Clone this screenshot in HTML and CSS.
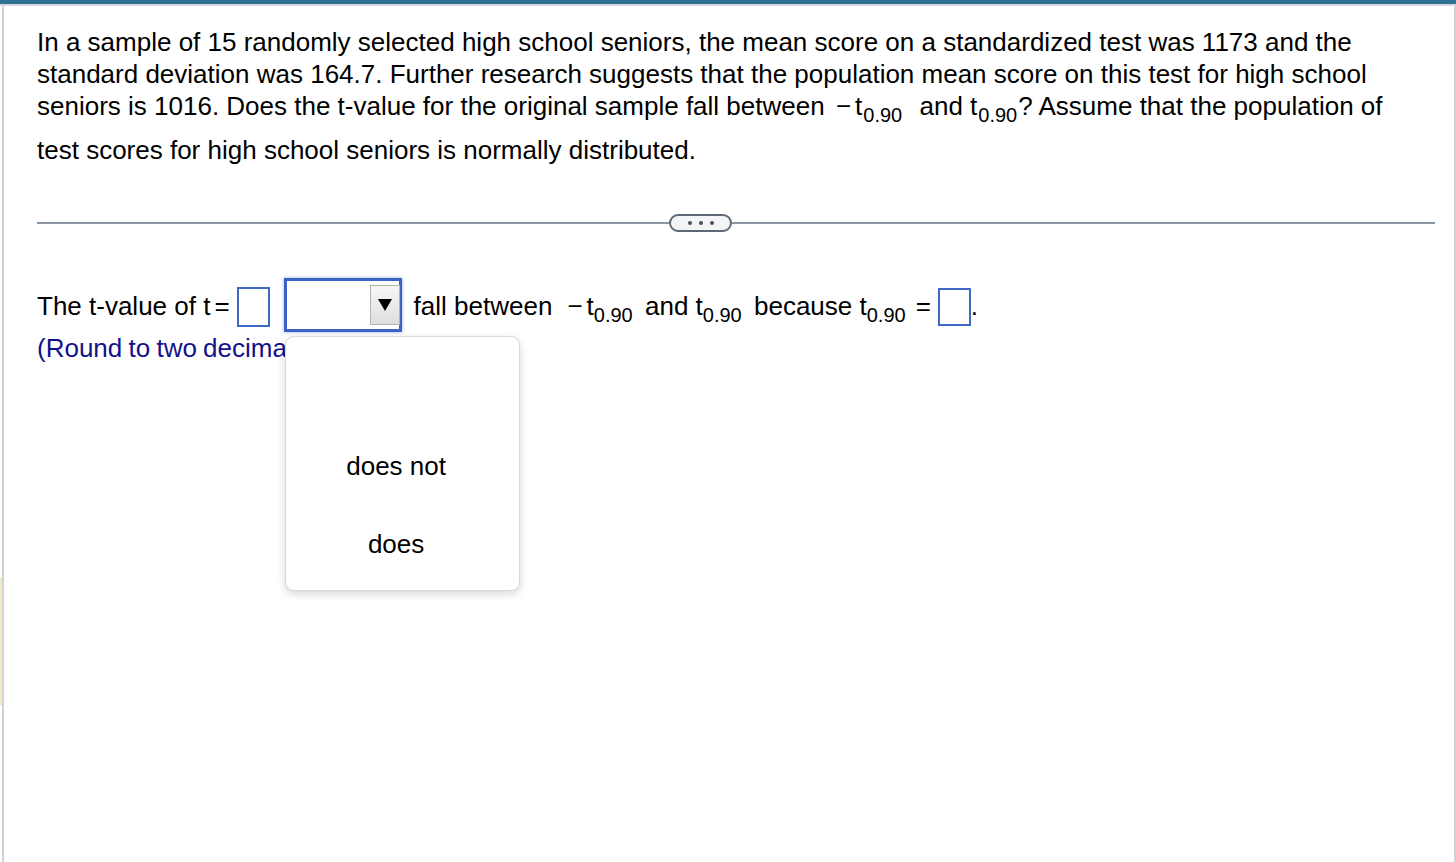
FILE: index.html
```html
<!DOCTYPE html>
<html>
<head>
<meta charset="utf-8">
<link rel="stylesheet" href="styles.css">
</head>
<body>
<div class="topbar"></div>
<div class="marker"></div>
<div class="frame">
  <p class="question">In a sample of 15 randomly selected high school seniors, the mean score on a standardized test was 1173 and the standard deviation was 164.7. Further research suggests that the population mean score on this test for high school seniors is 1016. Does the t-value for the original sample fall between <span class="neg">−</span>t<sub class="q1">0.90</sub> and t<sub class="q2">0.90</sub>? Assume that the population of test scores for high school seniors is normally distributed.</p>

  <div class="divider">
    <span class="rule rule-left"></span>
    <span class="more"><i></i><i></i><i></i></span>
    <span class="rule rule-right"></span>
  </div>

  <p class="answer">The t-value of t<span class="eq">=</span><span class="box box-t"></span><span class="select"><span class="arrow"><svg width="16" height="14" viewBox="0 0 16 14"><path d="M1 1 H15 L8 13 Z" fill="#000"/></svg></span><span class="menu"><span class="option">does not</span><span class="option">does</span></span></span><span class="after">fall between</span><span class="neg2">−</span>t<sub class="gap">0.90</sub> and t<sub class="gap">0.90</sub> because t<sub class="gap">0.90</sub><span class="eq2">=</span><span class="box box-crit"></span>.</p>
  <p class="hint">(Round to two decimal places as needed.)</p>
</div>
</body>
</html>
```

FILE: styles.css
```css
html, body {
  margin: 0;
  padding: 0;
  background: #ffffff;
}
body {
  height: 862px;
  overflow: hidden;
  font-family: "Liberation Sans", Arial, sans-serif;
  color: #000;
  position: relative;
}
.topbar {
  height: 4px;
  background: #2f7193;
  border-bottom: 2px solid #d3d7df;
}
.marker {
  position: absolute;
  left: 0;
  top: 577px;
  width: 2px;
  height: 128px;
  background: #f6e7c3;
}
.frame {
  margin-left: 2px;
  border-left: 2px solid #cdd2dc;
  border-right: 2px solid #cdd2dc;
  height: 856px;
  box-sizing: border-box;
  padding: 20px 19px 0 33px;
}
.question {
  margin: 0;
  padding-right: 14px;
  font-size: 26px;
  line-height: 32px;
}
sub {
  font-size: 20px;
  vertical-align: -7px;
  line-height: 38px;
}
sub.q1 {
  margin-left: 1px;
  margin-right: 10px;
}
sub.q2 {
  margin-left: 1px;
  margin-right: 1px;
}
sub.gap {
  margin-right: 5px;
}
.neg {
  margin-left: 4px;
  margin-right: 4px;
}
.divider {
  display: flex;
  align-items: center;
  height: 18px;
  margin-top: 48px;
}
.rule {
  height: 2px;
  background: #8a95a1;
}
.rule-left {
  flex: 0 0 632px;
}
.rule-right {
  flex: 1;
}
.more {
  flex: 0 0 auto;
  width: 63px;
  height: 18px;
  box-sizing: border-box;
  border: 2px solid #5d6976;
  border-radius: 9px;
  background: #f3f4f6;
  display: flex;
  align-items: center;
  justify-content: center;
  gap: 7px;
}
.more i {
  width: 4px;
  height: 4px;
  border-radius: 50%;
  background: #4b4f56;
}
.answer {
  margin: 46px 0 0;
  font-size: 26px;
  line-height: 32px;
  white-space: nowrap;
}
.eq {
  margin-left: 4px;
}
.box {
  display: inline-block;
  overflow: hidden;
  width: 33px;
  height: 40px;
  box-sizing: border-box;
  border: 2px solid #3f67c6;
  vertical-align: -12px;
}
.box-t {
  margin-left: 7px;
}
.box-crit {
  height: 38px;
  vertical-align: -11px;
  margin-left: 7px;
}
.select {
  display: inline-block;
  position: relative;
  width: 118px;
  height: 54px;
  box-sizing: border-box;
  border: 3px solid #3c61c7;
  box-shadow: 0 0 3px rgba(60, 97, 199, 0.55);
  margin-left: 14px;
  vertical-align: -17px;
  background: #fff;
}
.arrow {
  position: absolute;
  right: -1px;
  top: 4px;
  width: 30px;
  height: 40px;
  box-sizing: border-box;
  border: 1px solid #b4b4b4;
  background: linear-gradient(#f7f7f7, #dedede);
  display: flex;
  align-items: center;
  justify-content: center;
}
.menu {
  position: absolute;
  left: -2px;
  top: 55px;
  width: 235px;
  height: 255px;
  box-sizing: border-box;
  border: 1px solid #d9d9d9;
  border-radius: 9px;
  background: #fff;
  box-shadow: 0 3px 8px rgba(0, 0, 0, 0.16);
  display: flex;
  flex-direction: column;
  align-items: center;
  padding: 90px 12px 0 0;
  z-index: 2;
}
.option {
  display: flex;
  align-items: center;
  justify-content: center;
  height: 78px;
  font-size: 26px;
  color: #000;
}
.after {
  margin-left: 12px;
}
.neg2 {
  margin-left: 15px;
  margin-right: 4px;
}
.eq2 {
  margin-left: 5px;
}
.hint {
  margin: -2px 0 0;
  font-size: 26px;
  line-height: 32px;
  word-spacing: -1px;
  color: #11118a;
  white-space: nowrap;
}
```
